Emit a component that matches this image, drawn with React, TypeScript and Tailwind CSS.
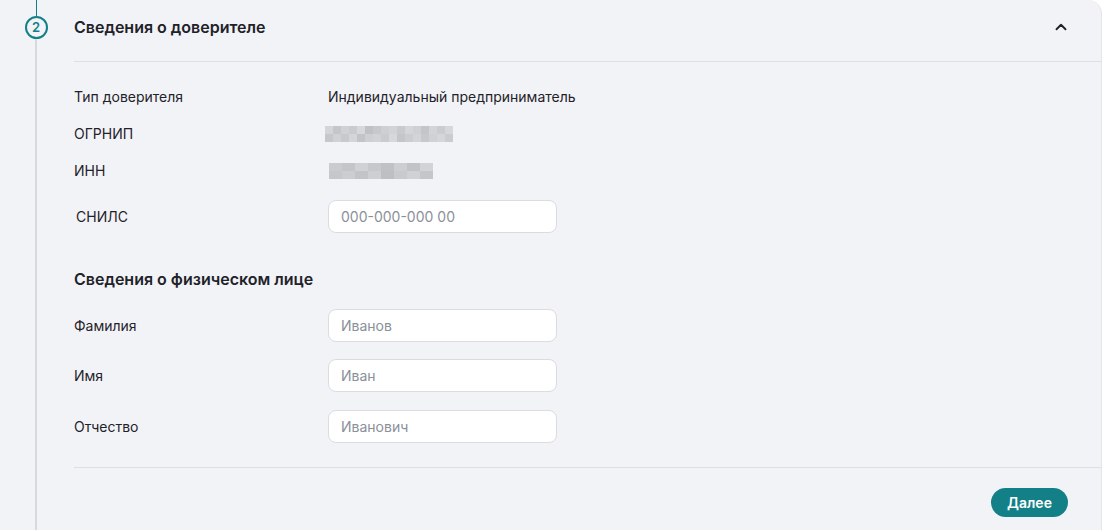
import { ChevronUp } from 'lucide-react';

const ogrnipCells = [
  'bg-[#d3d5d8]', 'bg-[#c4c6ca]', 'bg-[#cfd1d4]', 'bg-[#c9cbce]', 'bg-[#d6d8db]', 'bg-[#bfc1c5]', 'bg-[#c6c8cb]', 'bg-[#cdd0d3]',
  'bg-[#d1d3d6]', 'bg-[#c8cacd]', 'bg-[#d4d6d9]', 'bg-[#ced0d3]', 'bg-[#c3c5c9]', 'bg-[#d2d4d7]', 'bg-[#cacccf]', 'bg-[#d5d7da]',
  'bg-[#c5c7ca]', 'bg-[#cfd1d4]', 'bg-[#c7c9cc]', 'bg-[#d3d5d8]', 'bg-[#c2c4c8]', 'bg-[#cdcfd2]', 'bg-[#d0d2d5]', 'bg-[#c9cbce]',
  'bg-[#d6d8db]', 'bg-[#c4c6ca]', 'bg-[#cccdd1]', 'bg-[#d2d4d7]', 'bg-[#c6c8cb]', 'bg-[#cfd1d4]', 'bg-[#d4d6d9]', 'bg-[#caccce]',
];

const innCells = [
  'bg-[#c9cbce]', 'bg-[#c3c5c8]', 'bg-[#cfd1d4]', 'bg-[#c6c8cb]', 'bg-[#bfc1c4]', 'bg-[#ccced1]', 'bg-[#c1c3c7]', 'bg-[#d1d3d6]',
  'bg-[#c5c7ca]', 'bg-[#cbcdd0]', 'bg-[#c2c4c7]', 'bg-[#cdcfd2]', 'bg-[#bdbfc3]', 'bg-[#c8cacd]', 'bg-[#cfd1d4]', 'bg-[#c4c6c9]',
];

function Blurred({ cells, cols, className }: { cells: string[]; cols: string; className: string }) {
  return (
    <div className={`grid ${cols} ${className}`}>
      {cells.map((c, i) => (
        <div key={i} className={`h-[8px] ${c}`} />
      ))}
    </div>
  );
}

function Field({ placeholder }: { placeholder: string }) {
  return (
    <input
      placeholder={placeholder}
      className="h-[33px] w-[229px] rounded-[8px] border border-[#d9dce1] bg-white px-[12px] text-[14px] text-[#1f2229] outline-none placeholder:text-[#8b9099]"
    />
  );
}

function Row({ label, children, className = '' }: { label: string; children: React.ReactNode; className?: string }) {
  return (
    <div className={`flex items-center ${className}`}>
      <div className="w-[254px] text-[14px] text-[#1f2229]">{label}</div>
      {children}
    </div>
  );
}

export default function App() {
  return (
    <div className="min-h-screen bg-white" style={{ fontFamily: 'Inter, "Noto Sans", sans-serif' }}>
      <div className="flex h-[530px] w-[1102px] rounded-tr-[14px] border-r border-[#e3e5e9] bg-[#f2f3f7]">
        {/* Stepper */}
        <div className="flex w-[74px] flex-col items-center pr-[2px]">
          <div className="h-[16px] w-px bg-[#138088]" />
          <div className="flex h-[23px] w-[23px] items-center justify-center rounded-full border-2 border-[#138088] text-[13px] font-semibold text-[#138088]">
            2
          </div>
          <div className="w-[2px] flex-1 bg-[#d6d9de]" />
        </div>

        {/* Content */}
        <div className="flex flex-1 flex-col">
          <div className="flex h-[54px] items-center justify-between pr-[31px]">
            <h2 className="text-[16px] font-semibold text-[#1f2229]">Сведения о доверителе</h2>
            <ChevronUp className="h-[18px] w-[18px] text-[#1f2229]" strokeWidth={2.5} />
          </div>
          <div className="mt-[7px] border-t border-[#dcdfe4]" />

          <div className="mt-[16px]">
            <Row label="Тип доверителя" className="h-[37px]">
              <span className="text-[14px] text-[#1f2229]">Индивидуальный предприниматель</span>
            </Row>
            <Row label="ОГРНИП" className="h-[37px]">
              <Blurred cells={ogrnipCells} cols="grid-cols-[repeat(16,8px)]" className="-ml-[3px]" />
            </Row>
            <Row label="ИНН" className="h-[37px]">
              <Blurred cells={innCells} cols="grid-cols-[repeat(8,13px)]" className="ml-px" />
            </Row>
            <Row label="СНИЛС" className="mt-[11px] pl-[2px]">
              <div className="-ml-[2px]">
                <Field placeholder="000-000-000 00" />
              </div>
            </Row>
          </div>

          <h3 className="mt-[34px] h-[24px] text-[16px] leading-[24px] font-semibold text-[#1f2229]">
            Сведения о физическом лице
          </h3>

          <Row label="Фамилия" className="mt-[18px]">
            <Field placeholder="Иванов" />
          </Row>
          <Row label="Имя" className="mt-[17px]">
            <Field placeholder="Иван" />
          </Row>
          <Row label="Отчество" className="mt-[18px]">
            <Field placeholder="Иванович" />
          </Row>

          <div className="mt-[24px] border-t border-[#dcdfe4]" />

          <div className="mt-[20px] flex justify-end pr-[33px]">
            <button className="h-[29px] w-[77px] rounded-full bg-[#138088] text-[14px] font-semibold text-white">
              Далее
            </button>
          </div>
        </div>
      </div>
    </div>
  );
}
